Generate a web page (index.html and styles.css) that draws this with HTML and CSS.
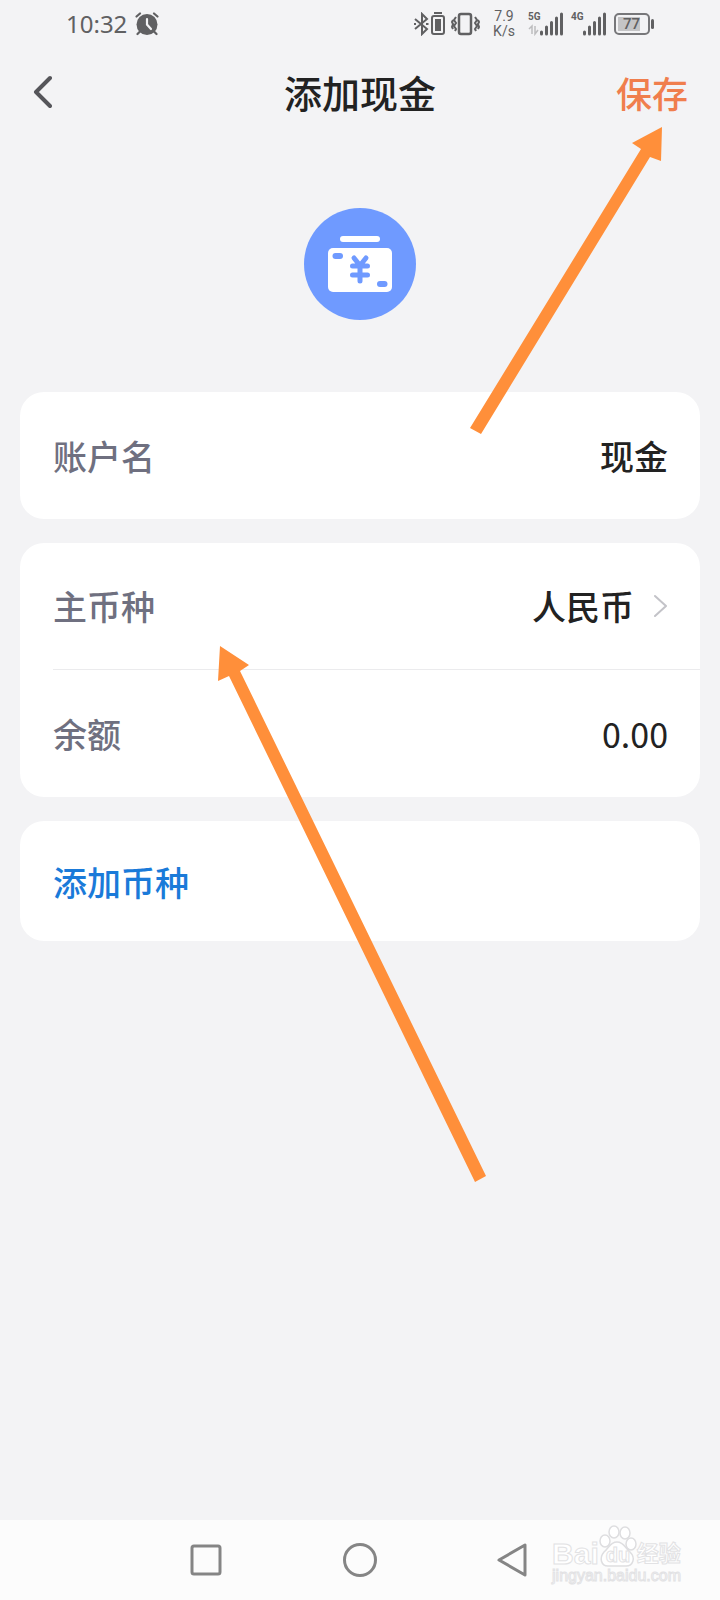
FILE: index.html
```html
<!DOCTYPE html>
<html lang="zh-CN">
<head>
    <meta charset="UTF-8">
    <meta name="viewport" content="width=device-width, initial-scale=1">
    <title>添加现金</title>
    <link rel="stylesheet" href="styles.css">
</head>
<body>
    <div class="status-bar">
        <div class="status-left">
            <span class="clock">10:32</span>
            <svg width="24" height="24" viewBox="0 0 24 24">
                <circle cx="12" cy="12.500" r="10.500" fill="#606062"/>
                <path d="M1.500 4.500 L5 1.500 M22.500 4.500 L19 1.500 M4.500 20 L2.500 22 M19.500 20 L21.500 22" stroke="#606062" stroke-width="2.200" stroke-linecap="round"/>
                <path d="M12 7 V12.500 L16 17" fill="none" stroke="#f3f3f5" stroke-width="2.200" stroke-linecap="round"/>
            </svg>
        </div>
        <div class="status-right">
            <svg width="66" height="24" viewBox="0 0 66 24" fill="none" stroke="#606062" stroke-width="2">
                <path d="M1 7 L13 17 L8 22 V2 L13 7 L1 17"/>
                <path d="M0 12 h2 M12 12 h2.500"/>
                <rect x="18" y="4" width="12" height="18" rx="2"/>
                <rect x="21" y="7" width="6" height="12" fill="#606062" stroke="none"/>
                <path d="M20 1 h8"/>
                <rect x="45" y="2" width="12" height="20" rx="2" stroke-width="2.500"/>
                <path d="M42 5 l-2 3 l2 3 l-2 3 l2 3 l-1 2 M39 8 l-1 2 l1 2 l-1 3 l1 2 M61 5 l2 3 l-2 3 l2 3 l-2 3 l1 2 M64 8 l1 2 l-1 2 l1 3 l-1 2"/>
            </svg>
            <div class="speed"><span>7.9</span><span>K/s</span></div>
            <div class="signal">
                <span class="net">5G</span>
                <svg width="36" height="24" viewBox="0 0 36 24">
                    <path d="M1 17 L4 14 V22 M7 14 V22 L10 18" fill="none" stroke="#bdbdbf" stroke-width="1.500"/>
                    <path d="M13.500 20 V22 M18.500 15 V22 M23.500 10.500 V22 M28.500 6 V22 M33.500 2 V22" stroke="#606062" stroke-width="3" stroke-linecap="round"/>
                </svg>
            </div>
            <div class="signal">
                <span class="net">4G</span>
                <svg width="36" height="24" viewBox="0 0 36 24">
                    <path d="M13.500 20 V22 M18.500 15 V22 M23.500 10.500 V22 M28.500 6 V22 M33.500 2 V22" stroke="#606062" stroke-width="3" stroke-linecap="round"/>
                </svg>
            </div>
            <div class="battery"><span class="battery-level">77</span></div>
        </div>
    </div>

    <header class="header">
        <button class="back-btn" aria-label="返回">
            <svg width="20" height="34" viewBox="0 0 20 34">
                <path d="M18 3 L4 17 L18 31" fill="none" stroke="#55555a" stroke-width="4" stroke-linecap="round" stroke-linejoin="round"/>
            </svg>
        </button>
        <h1 class="title">添加现金</h1>
        <button class="save-btn">保存</button>
    </header>

    <main class="content">
        <div class="account-icon">
            <svg width="112" height="112" viewBox="0 0 112 112">
                <circle cx="56" cy="56" r="56" fill="#6f9aff"/>
                <rect x="36" y="28" width="40" height="6" rx="3" fill="#fff"/>
                <rect x="24" y="40" width="64" height="44" rx="5" fill="#fff"/>
                <rect x="28.500" y="45" width="10.500" height="6" rx="3" fill="#6f9aff"/>
                <rect x="73" y="73" width="10.500" height="6" rx="3" fill="#6f9aff"/>
                <path d="M50 50 L56 57.500 L62 50 M56 58 V73 M48.500 58 H63.500 M48.500 67 H63.500" fill="none" stroke="#6f9aff" stroke-width="5" stroke-linecap="round" stroke-linejoin="round"/>
            </svg>
        </div>

        <div class="card">
            <div class="row">
                <label class="label" for="accountName">账户名</label>
                <input class="value" id="accountName" type="text" value="现金">
            </div>
        </div>

        <div class="card">
            <div class="row">
                <label class="label" for="currency">主币种</label>
                <button class="value picker" id="currency">
                    人民币
                    <svg width="14" height="24" viewBox="0 0 14 24">
                        <path d="M1 2 L12 12 L1 22" fill="none" stroke="#c3c3c8" stroke-width="2" stroke-linecap="round" stroke-linejoin="round"/>
                    </svg>
                </button>
            </div>
            <div class="row">
                <label class="label" for="balance">余额</label>
                <input class="value amount" id="balance" type="text" inputmode="decimal" value="0.00">
            </div>
        </div>

        <div class="card">
            <button class="add-btn">添加币种</button>
        </div>
    </main>

    <nav class="nav-bar">
        <button class="nav-btn" aria-label="最近任务">
            <svg width="34" height="34" viewBox="0 0 34 34"><rect x="3" y="3" width="28" height="28" rx="2"/></svg>
        </button>
        <button class="nav-btn" aria-label="主屏幕">
            <svg width="34" height="34" viewBox="0 0 34 34"><circle cx="17" cy="17" r="15.500"/></svg>
        </button>
        <button class="nav-btn" aria-label="返回">
            <svg width="34" height="34" viewBox="0 0 34 34"><path d="M28 2 V32 L2 17 Z"/></svg>
        </button>
        <div class="watermark">
            <div class="brand">
                <span>Bai</span>
                <span class="paw">
                    <svg width="38" height="42" viewBox="0 0 38 42" fill="#fff" stroke="#dedee0" stroke-width="1.500">
                        <ellipse cx="6" cy="16" rx="5" ry="6"/>
                        <ellipse cx="15" cy="7" rx="5" ry="6"/>
                        <ellipse cx="26" cy="8" rx="5" ry="6"/>
                        <ellipse cx="32" cy="19" rx="5" ry="6"/>
                        <path d="M18 17 C25 17 26 23 31 27 C37 33 34 41 27 41 H9 C2 41 0 33 5 27 C10 23 11 17 18 17 Z"/>
                    </svg>
                    <span class="paw-text">du</span>
                </span>
                <span class="brand-cn">经验</span>
            </div>
            <div class="site">jingyan.baidu.com</div>
        </div>
    </nav>

    <!-- guide arrows -->
    <svg class="arrows" viewBox="0 0 720 1600" fill="#ff8f3a">
        <path d="M662 127 L632 143 L641 149 L470 428 L481 434 L650 157 L661 161 Z"/>
        <path d="M220 646 L249 665 L240 671 L486 1176 L475 1182 L229 676 L218 681 Z"/>
    </svg>
</body>
</html>
```
FILE: styles.css
```css
* {
    box-sizing: border-box;
}
body {
    font-family: "Noto Sans CJK SC", "Noto Sans", sans-serif;
    background: #f3f3f5;
    margin: 0;
    color: #222;
    min-height: 100vh;
    display: flex;
    flex-direction: column;
    position: relative;
}
svg {
    display: block;
}
button,
input {
    font: inherit;
    color: inherit;
    background: none;
    border: none;
    padding: 0;
    margin: 0;
}
button {
    cursor: pointer;
}

/* status bar */
.status-bar {
    display: flex;
    justify-content: space-between;
    align-items: center;
    height: 48px;
    padding: 0 64px 0 66px;
    color: #606062;
}
.status-left,
.status-right {
    display: flex;
    align-items: center;
}
.status-left {
    gap: 8px;
}
.status-right {
    gap: 7px;
}
.clock {
    font-family: "Noto Sans", sans-serif;
    font-size: 24px;
    line-height: 24px;
}
.speed {
    display: flex;
    flex-direction: column;
    align-items: center;
    width: 34px;
    font-family: Roboto, sans-serif;
    font-size: 14px;
    line-height: 15px;
}
.signal {
    position: relative;
}
.net {
    position: absolute;
    top: 0;
    left: 0;
    font-family: Roboto, sans-serif;
    font-size: 10px;
    font-weight: 700;
    line-height: 10px;
}
.battery {
    position: relative;
    width: 36px;
    height: 22px;
    margin-right: 6px;
    padding: 2px;
    border: 2px solid #77777a;
    border-radius: 5px;
}
.battery::after {
    content: "";
    position: absolute;
    top: 4px;
    right: -6px;
    width: 3px;
    height: 10px;
    border-radius: 2px;
    background: #606062;
}
.battery-level {
    display: block;
    width: 77%;
    height: 14px;
    padding-left: 5px;
    background: #c4c4c6;
    font-family: Roboto, sans-serif;
    font-size: 15px;
    font-weight: 500;
    line-height: 14px;
}

/* header */
.header {
    display: grid;
    grid-template-columns: 1fr auto 1fr;
    align-items: center;
    height: 88px;
    padding: 0 32px;
}
.back-btn {
    justify-self: start;
}
.title {
    margin: 0;
    font-size: 38px;
    font-weight: 500;
    line-height: 48px;
}
.save-btn {
    justify-self: end;
    font-size: 36px;
    font-weight: 500;
    line-height: 48px;
    color: #f07e4d;
}

/* form */
.content {
    flex: 1;
    display: flex;
    flex-direction: column;
    gap: 24px;
    padding: 72px 20px;
}
.account-icon {
    align-self: center;
    margin-bottom: 48px;
}
.card {
    background: #fff;
    border-radius: 24px;
    padding-left: 33px;
}
.row {
    display: flex;
    align-items: center;
    justify-content: space-between;
    height: 127px;
    padding-right: 32px;
    font-size: 34px;
    font-weight: 500;
    line-height: 48px;
}
.row:not(:last-child) {
    border-bottom: 1px solid #ebebed;
}
.label {
    color: #6f7080;
}
.value {
    min-width: 0;
    text-align: right;
}
.amount {
    font-weight: 400;
}
.picker {
    display: flex;
    align-items: center;
    gap: 20px;
}
.add-btn {
    display: block;
    width: 100%;
    height: 120px;
    font-size: 34px;
    font-weight: 500;
    text-align: left;
    color: #1a7ad9;
}

/* navigation bar */
.nav-bar {
    position: relative;
    display: flex;
    justify-content: center;
    align-items: center;
    gap: 120px;
    height: 80px;
    background: #fcfcfc;
}
.nav-btn svg {
    fill: none;
    stroke: #858585;
    stroke-width: 3;
    stroke-linejoin: round;
}
.watermark {
    position: absolute;
    right: 39px;
    bottom: 15px;
    color: #fff;
    font-family: "Liberation Sans", "Noto Sans CJK SC", sans-serif;
    -webkit-text-stroke: 1px #e2e2e4;
}
.brand {
    display: flex;
    align-items: flex-end;
    font-size: 30px;
    font-weight: 700;
    line-height: 26px;
}
.paw {
    position: relative;
}
.paw-text {
    position: absolute;
    left: 7px;
    bottom: 2px;
    font-size: 20px;
    line-height: 20px;
}
.brand-cn {
    font-size: 22px;
}
.site {
    font-size: 16px;
    line-height: 18px;
}

.arrows {
    position: absolute;
    top: 0;
    left: 0;
    width: 100%;
    pointer-events: none;
}
```
